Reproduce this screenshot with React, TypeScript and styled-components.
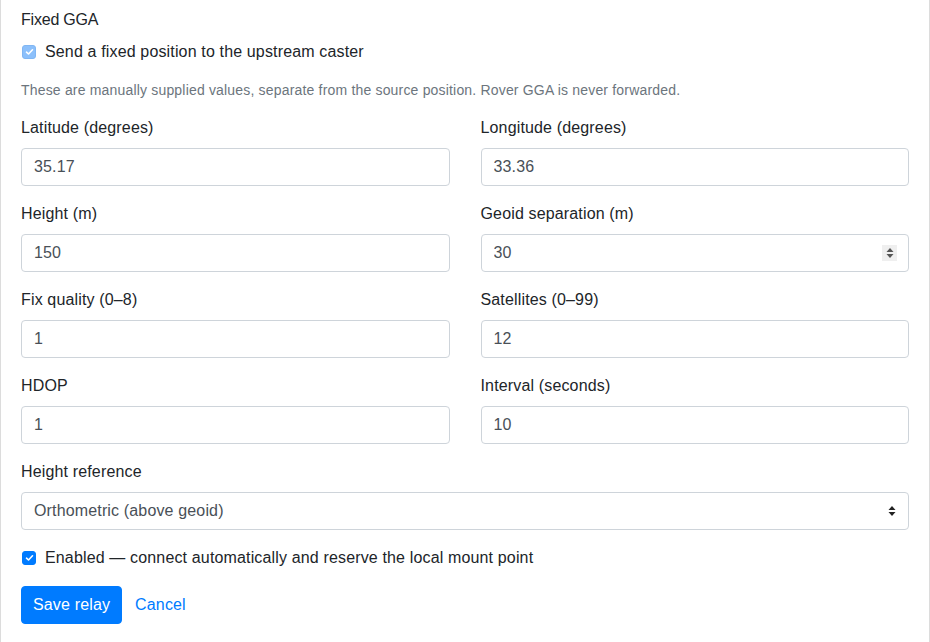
import React from "react"
import styled, { createGlobalStyle } from "styled-components"

const GlobalStyle = createGlobalStyle`
    body {
        margin: 0;
        background: #fff;
        font-family: "Liberation Sans", Arial, sans-serif;
        color: #212529;
        font-size: 16px;
        line-height: 1.5;
        letter-spacing: 0.15px;
    }
    * { box-sizing: border-box; }
`;

const Card = styled.div`
    border-left: 1px solid #dcdcdc;
    border-right: 1px solid #dcdcdc;
    padding: 8px 20px 20px 20px;
    min-height: 642px;
`;

const Heading = styled.div`
    font-size: 16px;
    line-height: 24px;
    margin-bottom: 8px;
    letter-spacing: -0.2px;
`;

const Check = styled.label`
    display: flex;
    align-items: center;
    gap: 9px;
    padding-left: 1px;
    line-height: 24px;
`;

const Box = styled.span<{ $muted?: boolean }>`
    width: 14px;
    height: 14px;
    border-radius: 3px;
    background: ${p => (p.$muted ? "#8cc0fb" : "#007bff")};
    border: 1px solid ${p => (p.$muted ? "#80b6f3" : "#007bff")};
    display: flex;
    align-items: center;
    justify-content: center;
`;

const Hint = styled.p`
    margin: 16px 0 15px 0;
    font-size: 14px;
    line-height: 21px;
    color: #6c757d;
    letter-spacing: 0.18px;
`;

const Grid = styled.div`
    display: grid;
    grid-template-columns: 1fr 1fr;
    column-gap: 31px;
`;

const Group = styled.div`
    margin-bottom: 16px;
`;

const Label = styled.label`
    display: block;
    line-height: 24px;
    margin-bottom: 8px;
`;

const Field = styled.div`
    position: relative;
`;

const Input = styled.input`
    display: block;
    width: 100%;
    height: 38px;
    padding: 6px 12px;
    font-family: inherit;
    font-size: 16px;
    letter-spacing: inherit;
    color: #495057;
    border: 1px solid #ced4da;
    border-radius: 4px;
    background: #fff;
    outline: none;
`;

const Spinner = styled.span`
    position: absolute;
    right: 12px;
    top: 11px;
    width: 15px;
    height: 16px;
    background: #efefef;
    display: flex;
    align-items: center;
    justify-content: center;
`;

const Select = styled.div`
    height: 38px;
    padding: 6px 12px;
    border: 1px solid #ced4da;
    border-radius: 4px;
    color: #495057;
    display: flex;
    align-items: center;
    justify-content: space-between;
    margin-bottom: 16px;
`;

const Actions = styled.div`
    display: flex;
    align-items: center;
    gap: 1px;
    margin-top: 16px;
`;

const Primary = styled.button`
    height: 38px;
    padding: 6px 11px;
    font-family: inherit;
    font-size: 16px;
    letter-spacing: inherit;
    color: #fff;
    background: #007bff;
    border: 1px solid #007bff;
    border-radius: 4px;
`;

const LinkButton = styled.button`
    height: 38px;
    padding: 6px 12px;
    font-family: inherit;
    font-size: 16px;
    letter-spacing: inherit;
    color: #007bff;
    background: none;
    border: none;
`;

const Tick = () => (
    <svg width="9" height="8" viewBox="0 0 8 8">
        <path d="M1 4.2 L3 6 L7 1.8" fill="none" stroke="#fff" strokeWidth="1.6" strokeLinecap="round" strokeLinejoin="round" />
    </svg>
);

const UpDown = ({ color }: { color: string }) => (
    <svg width="8" height="12" viewBox="0 0 8 12">
        <path d="M4 1 L7.5 5 L0.5 5 Z" fill={color} />
        <path d="M4 11 L7.5 7 L0.5 7 Z" fill={color} />
    </svg>
);

const fields: { label: string; value: string; spin?: boolean }[] = [
    { label: "Latitude (degrees)", value: "35.17" },
    { label: "Longitude (degrees)", value: "33.36" },
    { label: "Height (m)", value: "150" },
    { label: "Geoid separation (m)", value: "30", spin: true },
    { label: "Fix quality (0–8)", value: "1" },
    { label: "Satellites (0–99)", value: "12" },
    { label: "HDOP", value: "1" },
    { label: "Interval (seconds)", value: "10" },
];

const App: React.FC = () => {
    return (
        <>
            <GlobalStyle />
            <Card>
                <Heading>Fixed GGA</Heading>
                <Check>
                    <Box $muted><Tick /></Box>
                    Send a fixed position to the upstream caster
                </Check>
                <Hint>These are manually supplied values, separate from the source position. Rover GGA is never forwarded.</Hint>
                <Grid>
                    {fields.map(f => (
                        <Group key={f.label}>
                            <Label>{f.label}</Label>
                            <Field>
                                <Input defaultValue={f.value} />
                                {f.spin && <Spinner><UpDown color="#555" /></Spinner>}
                            </Field>
                        </Group>
                    ))}
                </Grid>
                <Label>Height reference</Label>
                <Select>
                    <span>Orthometric (above geoid)</span>
                    <UpDown color="#222" />
                </Select>
                <Check>
                    <Box><Tick /></Box>
                    Enabled — connect automatically and reserve the local mount point
                </Check>
                <Actions>
                    <Primary>Save relay</Primary>
                    <LinkButton>Cancel</LinkButton>
                </Actions>
            </Card>
        </>
    )
}

export default App;
